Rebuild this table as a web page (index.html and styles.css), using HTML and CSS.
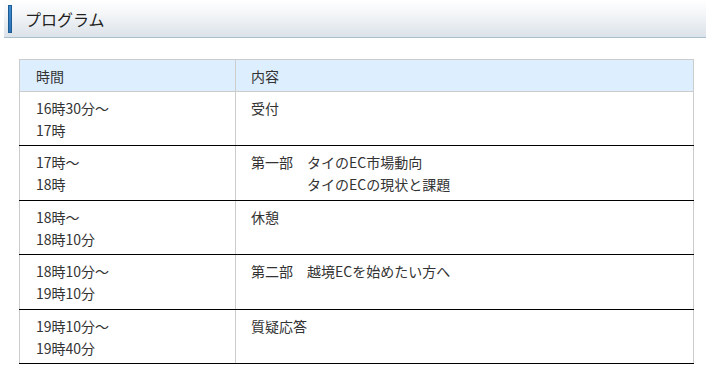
FILE: index.html
```html
<!DOCTYPE html>
<html lang="ja">
<head>
<meta charset="UTF-8">
<meta name="viewport" content="width=device-width, initial-scale=1.0">
<title>プログラム</title>
<link rel="stylesheet" href="styles.css">
</head>
<body>
<div class="section">
    <h2 class="section-title"><span class="title-bar"></span>プログラム</h2>
    <div class="section-body">
        <table class="program">
            <thead>
                <tr>
                    <th class="col-time">時間</th>
                    <th>内容</th>
                </tr>
            </thead>
            <tbody>
                <tr>
                    <td>16時30分～<br>17時</td>
                    <td>受付</td>
                </tr>
                <tr>
                    <td>17時～<br>18時</td>
                    <td>第一部　タイのEC市場動向<br>　　　　タイのECの現状と課題</td>
                </tr>
                <tr>
                    <td>18時～<br>18時10分</td>
                    <td>休憩</td>
                </tr>
                <tr>
                    <td>18時10分～<br>19時10分</td>
                    <td>第二部　越境ECを始めたい方へ</td>
                </tr>
                <tr>
                    <td>19時10分～<br>19時40分</td>
                    <td>質疑応答</td>
                </tr>
            </tbody>
        </table>
    </div>
</div>
</body>
</html>
```
FILE: styles.css
```css
body {
    margin: 0;
    padding: 0;
    background-color: #fff;
    color: #333;
    font-family: "Noto Sans CJK JP", "Noto Sans", sans-serif;
}
.section-title {
    display: flex;
    align-items: center;
    height: 37px;
    margin: 0 0 21px 4px;
    padding: 0;
    background: linear-gradient(to bottom, #ffffff 0%, #f3f5f7 40%, #dbe2e9 100%);
    border-bottom: 1px solid #a9bfcc;
    font-size: 16px;
    font-weight: normal;
    color: #222;
}
.title-bar {
    display: block;
    width: 2px;
    height: 26px;
    margin: 0 13px 0 4px;
    border: 1px solid #1d5c95;
    background: linear-gradient(to bottom, #3f8ccf, #2b72b4);
}
.section-body {
    padding: 0 12px 0 19px;
}
.program {
    width: 100%;
    border-collapse: collapse;
    font-size: 14px;
    line-height: 22px;
}
.program th,
.program td {
    padding: 5px 16px 4px 15px;
    text-align: left;
    vertical-align: top;
    font-weight: normal;
    border-left: 1px solid #cccccc;
    border-right: 1px solid #cccccc;
}
.program th {
    background-color: #ddeeff;
    border-top: 1px solid #cccccc;
    border-bottom: 1px solid #cccccc;
}
.program td {
    border-bottom: 1px solid #000;
}
.program tbody tr:nth-child(2n) td {
    padding-bottom: 5px;
}
.program .col-time {
    width: 183px;
    padding-left: 16px;
}
.program td:first-child {
    padding-left: 16px;
}
```
